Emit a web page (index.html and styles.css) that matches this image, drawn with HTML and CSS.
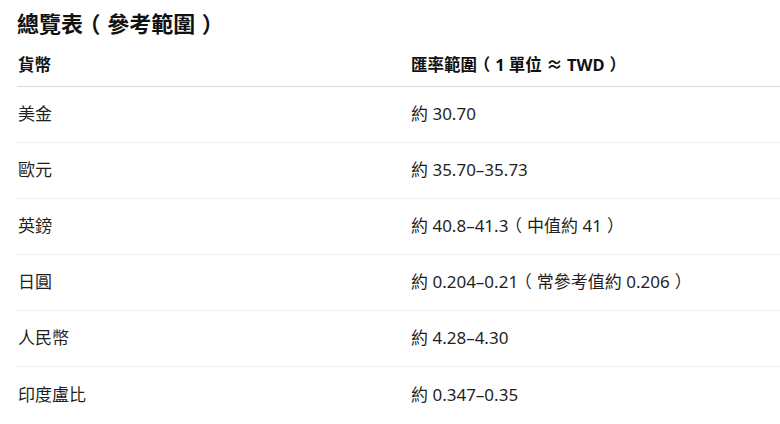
FILE: index.html
```html
<!DOCTYPE html>
<html lang="zh-Hant">
<head>
<meta charset="utf-8">
<link rel="stylesheet" href="styles.css">
</head>
<body>
<h2 class="title">總覽表<span class="p">（</span>參考範圍<span class="p">）</span></h2>
<div class="table">
  <div class="row head">
    <div class="cell c1">貨幣</div>
    <div class="cell c2">匯率範圍<span class="p">（</span>1 單位 ≈ TWD<span class="p">）</span></div>
  </div>
  <div class="row">
    <div class="cell c1">美金</div>
    <div class="cell c2">約 30.70</div>
  </div>
  <div class="row">
    <div class="cell c1">歐元</div>
    <div class="cell c2">約 35.70–35.73</div>
  </div>
  <div class="row">
    <div class="cell c1">英鎊</div>
    <div class="cell c2">約 40.8–41.3<span class="p">（</span>中值約 41<span class="p">）</span></div>
  </div>
  <div class="row">
    <div class="cell c1">日圓</div>
    <div class="cell c2">約 0.204–0.21<span class="p">（</span>常參考值約 0.206<span class="p">）</span></div>
  </div>
  <div class="row">
    <div class="cell c1">人民幣</div>
    <div class="cell c2">約 4.28–4.30</div>
  </div>
  <div class="row last">
    <div class="cell c1">印度盧比</div>
    <div class="cell c2">約 0.347–0.35</div>
  </div>
</div>
</body>
</html>
```
FILE: styles.css
```css
html, body {
  margin: 0;
  padding: 0;
  background: #ffffff;
}
body {
  font-family: "Noto Sans", "Noto Sans CJK TC", sans-serif;
  color: #1f1f1f;
  padding-left: 17px;
  overflow: hidden;
}
.title {
  margin: 0;
  height: 44px;
  display: flex;
  align-items: center;
  font-size: 22px;
  font-weight: 700;
  color: #111111;
}
.p {
  font-feature-settings: "halt";
  display: inline-block;
  margin: 0 0.3em;
}
.table {
  display: flex;
  flex-direction: column;
  width: 800px;
}
.row {
  display: grid;
  grid-template-columns: 393px 1fr;
  box-sizing: border-box;
  height: 56px;
  padding-bottom: 4px;
  align-items: center;
  border-bottom: 1px solid #efefef;
  font-size: 17px;
}
.row.head {
  height: 43px;
  padding-bottom: 2px;
  border-bottom: 1px solid #d9d9d9;
  font-weight: 700;
  font-size: 16.5px;
  color: #111111;
}
.row.last {
  border-bottom: none;
}
.cell {
  padding-left: 1px;
  white-space: nowrap;
}
```
